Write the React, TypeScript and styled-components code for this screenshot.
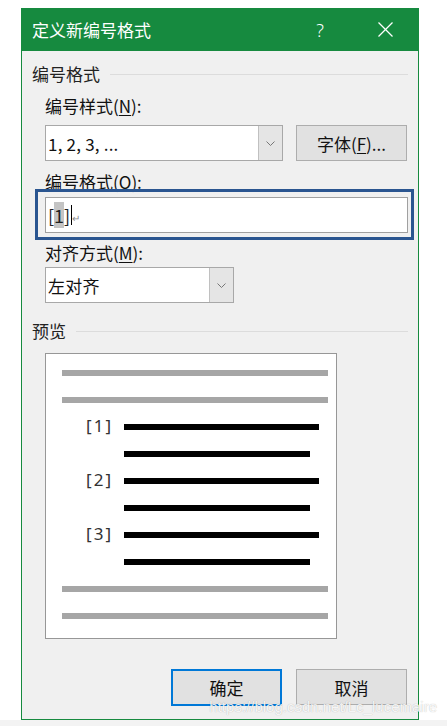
import React from "react";
import styled, { createGlobalStyle } from "styled-components";

const GlobalStyle = createGlobalStyle`
  html, body { margin: 0; padding: 0; background: #fff; }
  body { font-family: "Noto Sans CJK SC", "Noto Sans", sans-serif; }
  * { box-sizing: border-box; }
`;

const GREEN = "#168a3f";

const Page = styled.div`
  position: relative;
  width: 447px;
  height: 726px;
  padding-top: 8px;
  display: flex;
  flex-direction: column;
  background: #fff;
  overflow: hidden;
`;

const Dialog = styled.div`
  margin-left: 21px;
  width: 398px;
  height: 712px;
  display: flex;
  flex-direction: column;
`;

const TitleBar = styled.div`
  height: 43px;
  flex: none;
  background: ${GREEN};
  display: flex;
  align-items: center;
  padding: 0 11px 0 11px;
  color: #fff;
`;

const Title = styled.div`
  flex: 1;
  font-size: 17px;
  line-height: 20px;
  color: #fff;
`;

const TitleButton = styled.div`
  width: 46px;
  height: 43px;
  display: flex;
  align-items: center;
  justify-content: center;
  font-family: "Noto Sans", sans-serif;
  font-size: 18px;
  font-weight: 300;
  color: #fff;
`;

const TitleButtons = styled.div`
  display: flex;
  gap: 19px;
`;

const Body = styled.div`
  flex: 1;
  background: #f0f0f0;
  border: 1px solid ${GREEN};
  border-top: none;
  padding: 13px 10px 13px 10px;
  display: flex;
  flex-direction: column;
`;

const SectionHeader = styled.div<{ $top?: number }>`
  margin-top: ${(p) => p.$top ?? 0}px;
  height: 20px;
  display: flex;
  align-items: center;
  font-size: 17px;
  line-height: 20px;
  color: #222;
  &::after {
    content: "";
    flex: 1;
    height: 1px;
    margin-left: 10px;
    background: #dcdcdc;
  }
`;

const FieldLabel = styled.div<{ $top: number }>`
  margin-top: ${(p) => p.$top}px;
  margin-left: 13px;
  height: 20px;
  font-size: 17px;
  line-height: 20px;
  color: #111;
`;

const Mnemonic = styled.span`
  text-decoration: underline;
  text-underline-offset: 2px;
`;

const Row = styled.div<{ $top: number }>`
  margin-top: ${(p) => p.$top}px;
  margin-left: 13px;
  display: flex;
  gap: 13px;
`;

const Combo = styled.div<{ $width: number; $top?: number }>`
  margin-top: ${(p) => p.$top ?? 0}px;
  margin-left: ${(p) => (p.$top !== undefined ? 13 : 0)}px;
  width: ${(p) => p.$width}px;
  height: 36px;
  display: flex;
  background: #fff;
  border: 1px solid #a8a8a8;
`;

const ComboValue = styled.div`
  flex: 1;
  display: flex;
  align-items: center;
  padding-left: 2px;
  font-size: 17px;
  letter-spacing: 0.2px;
  color: #111;
`;

const ComboArrow = styled.div`
  width: 24px;
  background: #e5e5e5;
  border-left: 1px solid #c0c0c0;
  display: flex;
  align-items: center;
  justify-content: center;
`;

const Button = styled.button<{ $default?: boolean }>`
  width: 111px;
  height: ${(p) => (p.$default ? 37 : 36)}px;
  padding: 0;
  background: #e1e1e1;
  border: ${(p) => (p.$default ? "2px solid #0078d7" : "1px solid #adadad")};
  font-family: "Noto Sans CJK SC", "Noto Sans", sans-serif;
  font-size: 17px;
  color: #111;
`;

const InputWrap = styled.div`
  position: relative;
  margin-top: 5px;
  margin-left: 13px;
  width: 363px;
  height: 36px;
`;

const Input = styled.div`
  height: 100%;
  background: #fff;
  border: 1px solid #a0a0a0;
  padding-left: 2px;
  display: flex;
  align-items: center;
  font-size: 18px;
  color: #222;
`;

const Selected = styled.span`
  background: #c4c4c4;
`;

const Caret = styled.span`
  display: inline-block;
  width: 1px;
  height: 20px;
  background: #000;
  margin-left: 1px;
`;

const ParaMark = styled.span`
  font-size: 10px;
  color: #8a8a8a;
  margin-top: 4px;
`;

const Highlight = styled.div`
  position: absolute;
  top: -8px;
  left: -10px;
  right: -6px;
  bottom: -7px;
  border: 3px solid #2a5590;
  pointer-events: none;
`;

const PreviewBox = styled.div`
  margin-top: 12px;
  margin-left: 13px;
  width: 292px;
  height: 286px;
  background: #fff;
  border: 1px solid #979797;
  padding: 16px 0 0 16px;
  display: flex;
  flex-direction: column;
  gap: 21px;
`;

const Bar = styled.div<{ $width: number; $dark?: boolean; $indent?: number }>`
  flex: none;
  height: 6px;
  width: ${(p) => p.$width}px;
  margin-left: ${(p) => p.$indent ?? 0}px;
  background: ${(p) => (p.$dark ? "#000" : "#a6a6a6")};
`;

const NumberedRow = styled.div`
  height: 6px;
  display: flex;
  align-items: center;
`;

const NumberCell = styled.span`
  width: 62px;
  padding-right: 11px;
  margin-top: -3px;
  text-align: right;
  font-family: "Noto Sans", sans-serif;
  font-size: 17px;
  letter-spacing: 2px;
  line-height: 18px;
  color: #333;
`;

const ButtonRow = styled.div`
  margin-top: 30px;
  margin-right: 1px;
  display: flex;
  justify-content: flex-end;
  align-items: flex-start;
  gap: 14px;
`;

const Strip = styled.div`
  flex: 1;
  background: #f3f3f3;
`;

const Watermark = styled.div`
  position: absolute;
  right: 10px;
  top: 698px;
  font-family: "Liberation Sans", Arial, sans-serif;
  font-size: 15px;
  line-height: 17px;
  color: rgba(255, 255, 255, 0.9);
  text-shadow: 0 0 1px rgba(0, 0, 0, 0.3);
  pointer-events: none;
`;

const Chevron = () => (
  <svg width="9" height="5" viewBox="0 0 9 5">
    <polyline points="0.5,0.5 4.5,4.5 8.5,0.5" fill="none" stroke="#777" strokeWidth="1" />
  </svg>
);

const CloseIcon = () => (
  <svg width="15" height="15" viewBox="0 0 15 15">
    <line x1="0.5" y1="0.5" x2="14.5" y2="14.5" stroke="#fff" strokeWidth="1.3" />
    <line x1="14.5" y1="0.5" x2="0.5" y2="14.5" stroke="#fff" strokeWidth="1.3" />
  </svg>
);

const items = ["[1]", "[2]", "[3]"];

export default function App() {
  return (
    <>
      <GlobalStyle />
      <Page>
        <Dialog>
          <TitleBar>
            <Title>定义新编号格式</Title>
            <TitleButtons>
              <TitleButton>?</TitleButton>
              <TitleButton>
                <CloseIcon />
              </TitleButton>
            </TitleButtons>
          </TitleBar>
          <Body>
            <SectionHeader>编号格式</SectionHeader>
            <FieldLabel $top={12}>
              编号样式(<Mnemonic>N</Mnemonic>):
            </FieldLabel>
            <Row $top={9}>
              <Combo $width={238}>
                <ComboValue>1, 2, 3, ...</ComboValue>
                <ComboArrow>
                  <Chevron />
                </ComboArrow>
              </Combo>
              <Button>
                字体(<Mnemonic>F</Mnemonic>)...
              </Button>
            </Row>
            <FieldLabel $top={11}>
              编号格式(<Mnemonic>O</Mnemonic>):
            </FieldLabel>
            <InputWrap>
              <Input>
                [<Selected>1</Selected>]<Caret />
                <ParaMark>↵</ParaMark>
              </Input>
              <Highlight />
            </InputWrap>
            <FieldLabel $top={10}>
              对齐方式(<Mnemonic>M</Mnemonic>):
            </FieldLabel>
            <Combo $width={189} $top={4}>
              <ComboValue>左对齐</ComboValue>
              <ComboArrow>
                <Chevron />
              </ComboArrow>
            </Combo>
            <SectionHeader $top={18}>预览</SectionHeader>
            <PreviewBox>
              <Bar $width={266} />
              <Bar $width={266} />
              {items.map((n) => (
                <React.Fragment key={n}>
                  <NumberedRow>
                    <NumberCell>{n}</NumberCell>
                    <Bar $width={195} $dark />
                  </NumberedRow>
                  <Bar $width={186} $dark $indent={62} />
                </React.Fragment>
              ))}
              <Bar $width={266} />
              <Bar $width={266} />
            </PreviewBox>
            <ButtonRow>
              <Button $default>确定</Button>
              <Button>取消</Button>
            </ButtonRow>
          </Body>
        </Dialog>
        <Strip />
        <Watermark>https://blog.csdn.net/Lc_lucemaire</Watermark>
      </Page>
    </>
  );
}
